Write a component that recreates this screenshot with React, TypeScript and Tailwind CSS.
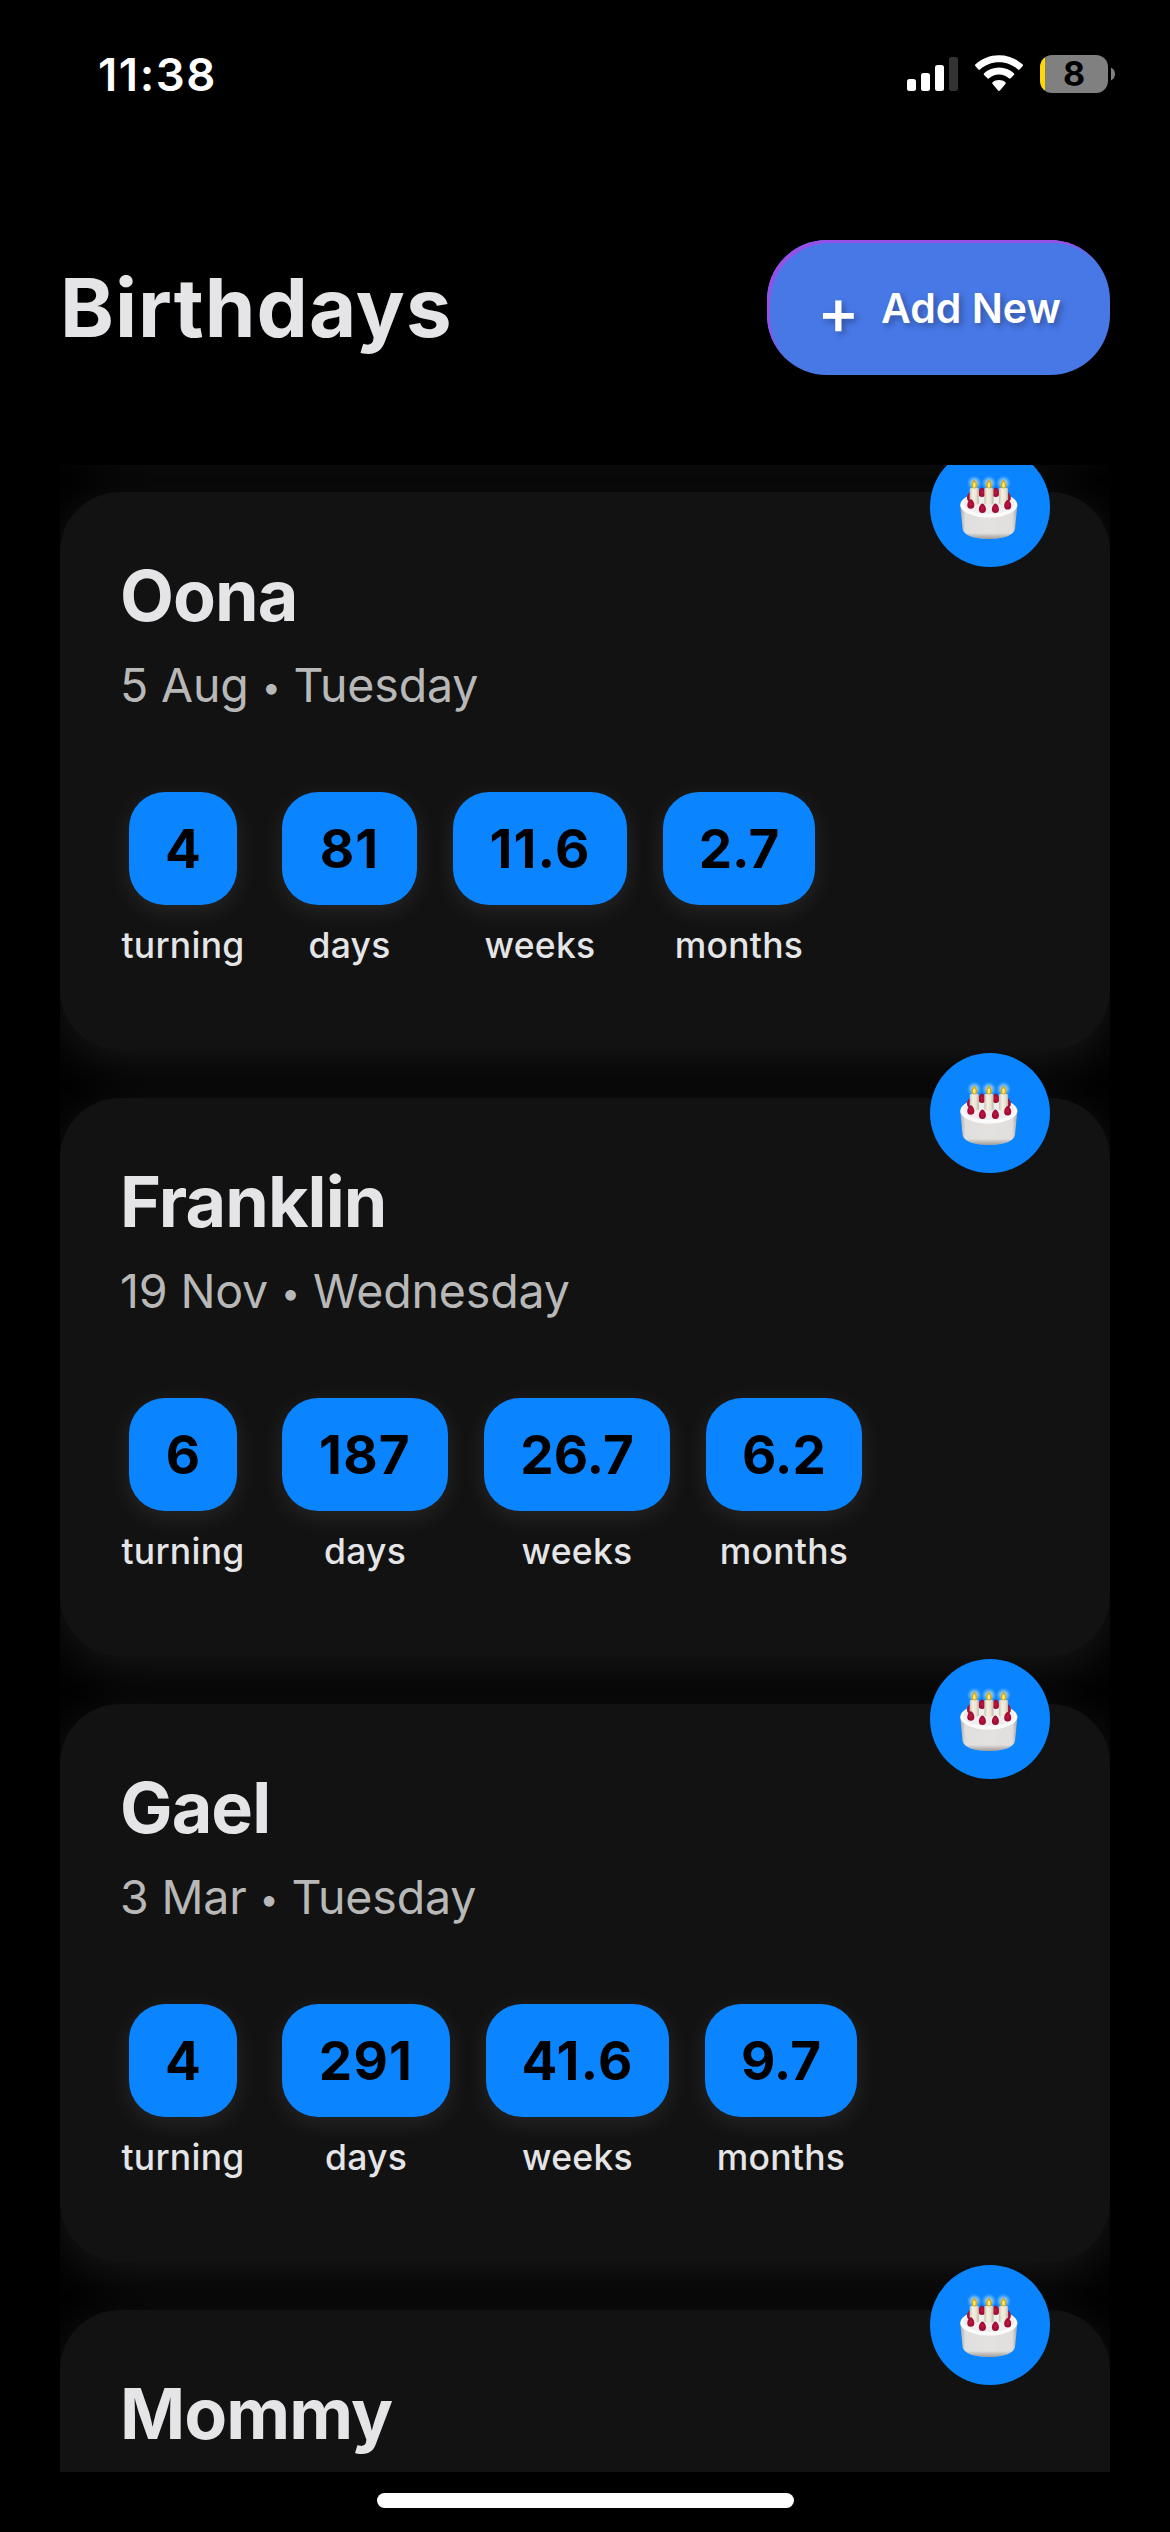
type Stat = { value: string; label: string; width: string };
type Birthday = { name: string; day: string; weekday: string; stats: Stat[] };

const birthdays: Birthday[] = [
  {
    name: "Oona",
    day: "5 Aug",
    weekday: "Tuesday",
    stats: [
      { value: "4", label: "turning", width: "w-[108px]" },
      { value: "81", label: "days", width: "w-[135px]" },
      { value: "11.6", label: "weeks", width: "w-[174px]" },
      { value: "2.7", label: "months", width: "w-[152px]" },
    ],
  },
  {
    name: "Franklin",
    day: "19 Nov",
    weekday: "Wednesday",
    stats: [
      { value: "6", label: "turning", width: "w-[108px]" },
      { value: "187", label: "days", width: "w-[166px]" },
      { value: "26.7", label: "weeks", width: "w-[186px]" },
      { value: "6.2", label: "months", width: "w-[156px]" },
    ],
  },
  {
    name: "Gael",
    day: "3 Mar",
    weekday: "Tuesday",
    stats: [
      { value: "4", label: "turning", width: "w-[108px]" },
      { value: "291", label: "days", width: "w-[168px]" },
      { value: "41.6", label: "weeks", width: "w-[183px]" },
      { value: "9.7", label: "months", width: "w-[152px]" },
    ],
  },
  { name: "Mommy", day: "", weekday: "", stats: [] },
];

function StatusBar() {
  return (
    <div className="flex h-[150px] shrink-0 items-start justify-between pl-[98px] pr-[55px]">
      <span className="mt-[47px] text-[45.500px] font-semibold leading-[55px] tracking-[1.6px] text-white">11:38</span>
      <div className="mt-[55px] flex items-start">
        <svg className="h-[38px] w-[52px]" viewBox="0 0 52 38">
          <rect x="0" y="24" width="9" height="12" rx="2.5" fill="#fff" />
          <rect x="14" y="18" width="9" height="18" rx="2.5" fill="#fff" />
          <rect x="28" y="10" width="9" height="26" rx="2.5" fill="#fff" />
          <rect x="42" y="2" width="9" height="34" rx="2.5" fill="#333" />
        </svg>
        <svg className="ml-4 h-[38px] w-[48px]" viewBox="0 0 48 38">
          <path
            d="M24 .3C33 .3 41.300 3.700 47.500 9.300Q48.500 10.300 47.500 11.300L44.600 14.400Q43.800 15.200 42.900 14.400C37.900 9.900 31.300 7.200 24 7.200S10.100 9.900 5.100 14.400Q4.200 15.200 3.400 14.400L.5 11.300Q-.5 10.300 .5 9.300C6.700 3.700 15 .3 24 .3Z"
            fill="#fff"
          />
          <path
            d="M24 12.600C29.700 12.600 34.900 14.700 38.900 18.200Q39.800 19.100 38.900 20L35.600 23.300Q34.800 24 33.900 23.300C31.300 21 27.800 19.600 24 19.600S16.700 21 14.100 23.300Q13.200 24 12.400 23.300L9.100 20Q8.200 19.100 9.100 18.200C13.100 14.700 18.300 12.600 24 12.600Z"
            fill="#fff"
          />
          <path d="M24 25C26.600 25 28.700 25.900 30.400 27.300Q31.200 28.100 30.400 28.900L24.900 35.500Q24 36.400 23.100 35.500L17.600 28.900Q16.800 28.100 17.600 27.300C19.300 25.900 21.400 25 24 25Z" fill="#fff" />
        </svg>
        <div className="ml-[17px] h-[38px] w-[68px] rounded-[12px] bg-[linear-gradient(90deg,#ffd60a_5px,#808080_5px)] text-center text-[34px] font-bold leading-[38px] text-black">
          8
        </div>
        <svg className="ml-[3px] mt-[12px] h-[14px] w-[4px]" viewBox="0 0 4 14">
          <path d="M0 .5C2.500 1.800 4 4 4 7S2.500 12.200 0 13.500Z" fill="#808080" />
        </svg>
      </div>
    </div>
  );
}

function Berry({ x, y }: { x: number; y: number }) {
  return (
    <path
      transform={`translate(${x} ${y})`}
      d="M0 -5C2 -4.600 3.500 -1.500 3.500 1C3.500 3.400 2 4.500 0 4.500S-3.500 3.400 -3.500 1C-3.500 -1.500 -2 -4.600 0 -5Z"
      fill="url(#berry)"
    />
  );
}

function Candle({ x }: { x: number }) {
  return (
    <g transform={`translate(${x} 0)`}>
      <circle cy="36" r="7.500" fill="url(#glow)" />
      <path d="M-4.600 41.500Q0 39.300 4.600 41.500V56.500Q0 60 -4.600 56.500Z" fill="url(#wax)" />
      <path d="M0 32.500C1.500 34.500 2.900 36.800 2.900 38.500C2.900 40.400 1.600 41.500 0 41.500S-2.900 40.400 -2.900 38.500C-2.900 36.800 -1.500 34.500 0 32.500Z" fill="#d9a514" />
      <ellipse cy="38" rx="1.300" ry="2.700" fill="#fff07a" />
    </g>
  );
}

function Cake() {
  return (
    <svg className="size-[120px]" viewBox="0 0 120 120">
      <defs>
        <linearGradient id="side" x1="0" x2="1" y1="0" y2="0">
          <stop offset="0" stopColor="#aaa8a5" />
          <stop offset=".09" stopColor="#e0dfdd" />
          <stop offset=".5" stopColor="#e4e1df" />
          <stop offset=".91" stopColor="#e0dfdd" />
          <stop offset="1" stopColor="#a5a3a0" />
        </linearGradient>
        <linearGradient id="base" x1="0" x2="0" y1="0" y2="1">
          <stop offset=".82" stopColor="#77736f" stopOpacity="0" />
          <stop offset="1" stopColor="#77736f" stopOpacity=".65" />
        </linearGradient>
        <linearGradient id="wax" x1="0" x2="1" y1="0" y2="0">
          <stop offset="0" stopColor="#c9c4b2" />
          <stop offset=".35" stopColor="#f4f0e2" />
          <stop offset=".7" stopColor="#e9e4d3" />
          <stop offset="1" stopColor="#bdb7a4" />
        </linearGradient>
        <radialGradient id="berry">
          <stop offset="0" stopColor="#c01842" />
          <stop offset="1" stopColor="#98082f" />
        </radialGradient>
        <radialGradient id="glow">
          <stop offset="0" stopColor="#f5f3b5" stopOpacity=".9" />
          <stop offset=".5" stopColor="#c5e4dc" stopOpacity=".55" />
          <stop offset="1" stopColor="#8cc8ff" stopOpacity="0" />
        </radialGradient>
      </defs>
      <path d="M30.200 58L32.600 82C33.500 88.500 45 92 58.800 92S84.100 88.500 85 82L87.400 58Z" fill="url(#side)" />
      <path d="M30.200 58L32.600 82C33.500 88.500 45 92 58.800 92S84.100 88.500 85 82L87.400 58Z" fill="url(#base)" />
      <ellipse cx="58.800" cy="57.800" rx="28.600" ry="12.800" fill="#fbfbfb" />
      <ellipse cx="58.800" cy="56.500" rx="25.500" ry="10.500" fill="#eeedf0" />
      <Berry x={52} y={45.500} />
      <Berry x={65.700} y={45.500} />
      <Berry x={40.500} y={50} />
      <Berry x={77.300} y={50} />
      <Candle x={44.300} />
      <Candle x={58.900} />
      <Candle x={73.500} />
      <Berry x={40.800} y={57.300} />
      <Berry x={52.400} y={61.400} />
      <Berry x={65.400} y={61.400} />
      <Berry x={77.700} y={58} />
    </svg>
  );
}

function BirthdayCard({ name, day, weekday, stats }: Birthday) {
  return (
    <div className="relative h-[558px] shrink-0 rounded-[60px] bg-[#121212] p-[60px] shadow-[0_12px_54px_rgba(255,255,255,0.1)]">
      <div className="absolute -top-[45px] right-[60px] size-[120px] rounded-full bg-[#0a84ff]">
        <Cake />
      </div>
      <h2 className="text-[70px] font-bold leading-[87px] tracking-[-0.9px] text-[#e5e5e7]">{name}</h2>
      <p className="mt-[17px] h-[58px] whitespace-nowrap text-[46.500px] leading-[58px] tracking-[-0.15px] text-[#b8b8b8]">
        {day} {day && <span className="align-[3px] text-[34px] leading-none">•</span>} {weekday}
      </p>
      <div className="mt-[78px] flex gap-9">
        {stats.map((stat) => (
          <div key={stat.label} className="flex flex-col items-center first:w-[126px]">
            <div
              className={`${stat.width} ${
                stat.value.includes("1") ? "tracking-[1.2px]" : "tracking-normal"
              } h-[113px] rounded-[36px] bg-[#0a84ff] text-center text-[53px] font-bold leading-[115px] text-black shadow-[0_6px_24px_rgba(255,255,255,0.09)]`}
            >
              {stat.value}
            </div>
            <div className="mt-[19px] text-[35.500px] font-medium leading-[43px] tracking-[0.25px] text-[#e5e5e7]">
              {stat.label}
            </div>
          </div>
        ))}
      </div>
    </div>
  );
}

export default function App() {
  return (
    <div className="flex h-[2532px] w-[1170px] flex-col overflow-hidden bg-black font-['Inter',sans-serif]">
      <StatusBar />
      <header className="flex h-[315px] shrink-0 items-start justify-between px-[60px] pt-[90px]">
        <h1 className="text-[81.500px] font-bold leading-[135px] tracking-[1px] text-[#e5e5e7]">Birthdays</h1>
        <button className="flex h-[135px] w-[343px] items-center rounded-[60px] bg-[#4778e6] pl-[50px] text-white shadow-[inset_3px_3px_0_0_#9550e8] [text-shadow:3px_3px_6px_rgba(0,0,0,0.3)]">
          <span className="w-[40px] pt-[7px] text-center text-[64px] font-medium leading-[60px]">+</span>
          <span className="ml-[24px] whitespace-nowrap text-[41px] font-semibold leading-[60px]">Add New</span>
        </button>
      </header>
      <main className="mx-[60px] flex h-[2007px] shrink-0 flex-col gap-12 overflow-hidden">
        {/* end of the card that is scrolled out above the list */}
        <div className="-mt-[141px] h-[120px] shrink-0 rounded-b-[60px] bg-[#121212] shadow-[0_12px_54px_rgba(255,255,255,0.1)]" />
        {birthdays.map((b) => (
          <BirthdayCard key={b.name} {...b} />
        ))}
      </main>
      <div className="mx-auto mt-[21px] h-[15px] w-[417px] shrink-0 rounded-full bg-white" />
    </div>
  );
}
